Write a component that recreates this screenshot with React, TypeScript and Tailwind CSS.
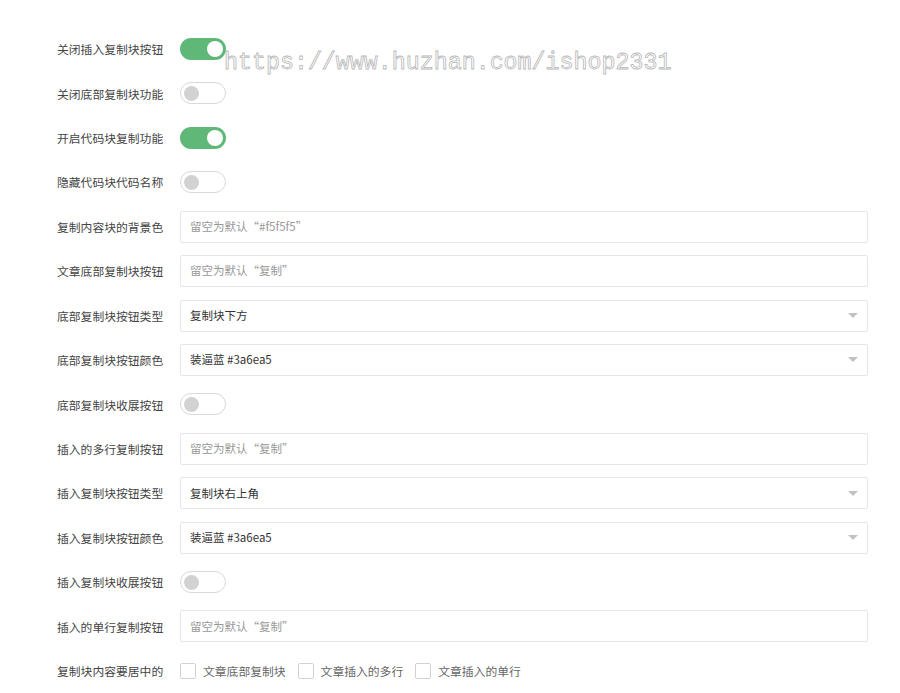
import React from "react";

type Row =
  | { kind: "switch"; label: string; on: boolean }
  | { kind: "input"; label: string; placeholder: string }
  | { kind: "select"; label: string; value: string }
  | { kind: "checks"; label: string; options: string[] };

const rows: Row[] = [
  { kind: "switch", label: "关闭插入复制块按钮", on: true },
  { kind: "switch", label: "关闭底部复制块功能", on: false },
  { kind: "switch", label: "开启代码块复制功能", on: true },
  { kind: "switch", label: "隐藏代码块代码名称", on: false },
  { kind: "input", label: "复制内容块的背景色", placeholder: "留空为默认“#f5f5f5”" },
  { kind: "input", label: "文章底部复制块按钮", placeholder: "留空为默认“复制”" },
  { kind: "select", label: "底部复制块按钮类型", value: "复制块下方" },
  { kind: "select", label: "底部复制块按钮颜色", value: "装逼蓝 #3a6ea5" },
  { kind: "switch", label: "底部复制块收展按钮", on: false },
  { kind: "input", label: "插入的多行复制按钮", placeholder: "留空为默认“复制”" },
  { kind: "select", label: "插入复制块按钮类型", value: "复制块右上角" },
  { kind: "select", label: "插入复制块按钮颜色", value: "装逼蓝 #3a6ea5" },
  { kind: "switch", label: "插入复制块收展按钮", on: false },
  { kind: "input", label: "插入的单行复制按钮", placeholder: "留空为默认“复制”" },
  { kind: "checks", label: "复制块内容要居中的", options: ["文章底部复制块", "文章插入的多行", "文章插入的单行"] },
];

function Switch({ on }: { on: boolean }) {
  if (on) {
    return (
      <div className="w-[46px] h-[22px] rounded-full bg-[#5fb878] flex items-center justify-end pr-[3px]">
        <div className="w-[16px] h-[16px] rounded-full bg-white" />
      </div>
    );
  }
  return (
    <div className="w-[46px] h-[22px] rounded-full border border-[#d9d9d9] bg-white flex items-center pl-[3px]">
      <div className="w-[15px] h-[15px] rounded-full bg-[#d2d2d2]" />
    </div>
  );
}

function Field({ row }: { row: Row }) {
  if (row.kind === "switch") return <Switch on={row.on} />;
  if (row.kind === "input") {
    return (
      <div className="flex-1 h-[32px] border border-[#e6e6e6] rounded-[2px] flex items-center px-[9px] text-[#999] text-[11.5px]">
        {row.placeholder}
      </div>
    );
  }
  if (row.kind === "select") {
    return (
      <div className="flex-1 h-[32px] border border-[#e6e6e6] rounded-[2px] flex items-center justify-between pl-[9px] pr-[9px] text-[#333] text-[11.5px]">
        <span>{row.value}</span>
        <span className="w-0 h-0 border-l-[5px] border-r-[5px] border-t-[5px] border-l-transparent border-r-transparent border-t-[#c2c2c2]" />
      </div>
    );
  }
  return (
    <div className="flex items-center">
      {row.options.map((o) => (
        <div key={o} className="flex items-center mr-[12px]">
          <div className="w-[16px] h-[16px] border border-[#d2d2d2] rounded-[2px] bg-white mr-[7px]" />
          <span className="text-[11.8px] text-[#666]">{o}</span>
        </div>
      ))}
    </div>
  );
}

export default function App() {
  return (
    <div
      className="relative w-[900px] h-[693px] bg-white overflow-hidden"
      style={{ fontFamily: '"Noto Sans CJK SC", "Noto Sans", sans-serif' }}
    >
      <div className="flex flex-col gap-[12.43px] pt-[33px] pl-[57px] pr-[32px]">
        {rows.map((r) => (
          <div key={r.label} className="flex items-center h-[32px]">
            <div className="w-[123px] shrink-0 text-[11.8px] text-[#444]">{r.label}</div>
            <Field row={r} />
          </div>
        ))}
      </div>
      {/* watermark */}
      <div
        className="absolute left-[224px] top-[48px] text-[23.3px] leading-[30px] text-transparent [-webkit-text-stroke:0.8px_#b8b8b8] pointer-events-none"
        style={{ fontFamily: '"Liberation Mono", monospace' }}
      >
        https://www.huzhan.com/ishop2331
      </div>
    </div>
  );
}
